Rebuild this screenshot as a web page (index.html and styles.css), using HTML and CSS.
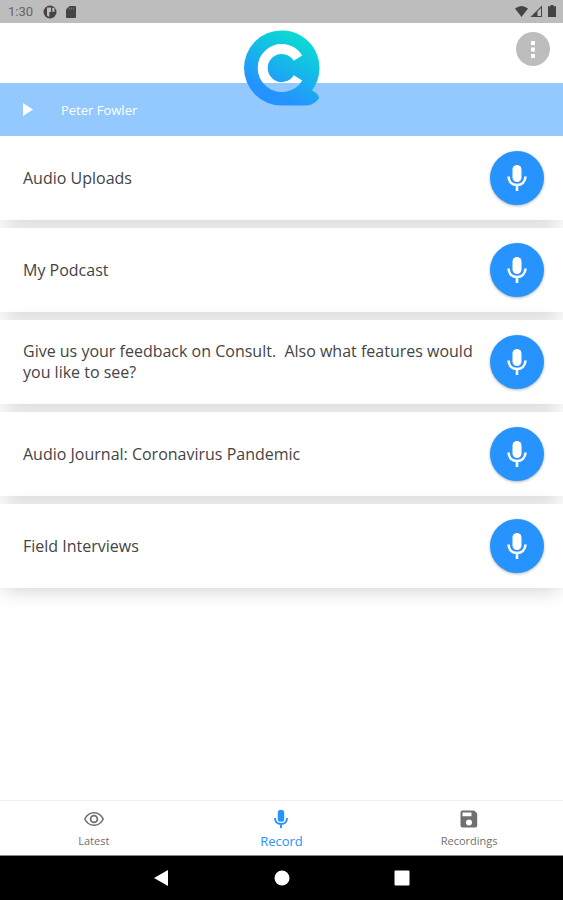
FILE: index.html
```html
<!DOCTYPE html>
<html lang="en">
<head>
<meta charset="utf-8">
<meta name="viewport" content="width=device-width, initial-scale=1">
<title>Consult</title>
<link rel="stylesheet" href="styles.css">
</head>
<body>
<svg class="defs" aria-hidden="true">
  <symbol id="mic" viewBox="0 0 20 26">
    <rect x="5.5" y="0" width="9" height="17" rx="4.5" fill="currentColor"/>
    <path d="M1.500 11.500C1.800 16.800 5.200 20 10 20S18.200 16.800 18.500 11.500M10 20v6" fill="none" stroke="currentColor" stroke-width="2.600"/>
  </symbol>
</svg>

<div class="status">
  <span class="clock">1:30</span>
  <svg class="status-app" viewBox="0 0 14 14"><circle cx="7" cy="7" r="6.500" fill="#444"/><path d="M4 2.500h4v4.500H6.300v5L4 10.500z" fill="#bdbdbd"/><path d="M9.300 2.800h2.200v4H9.300z" fill="#bdbdbd"/></svg>
  <svg class="status-card" viewBox="0 0 10 12"><path d="M3.500 0H9a1 1 0 0 1 1 1v10a1 1 0 0 1-1 1H1a1 1 0 0 1-1-1V3.500z" fill="#444"/><path d="M3.500 1.500v2M5.500 1.500v2M7.500 1.500v2" stroke="#777"/></svg>
  <svg class="status-right" viewBox="0 0 41 13"><path d="M0 3.500Q6.500-1.500 13 3.500L6.500 12z" fill="#444"/><path d="M15.500 12L27 .5V12z" fill="#444"/><path d="M22.500 6.500L26 3v8h-3.500z" fill="#bdbdbd"/><path d="M35.500 0h3v1.200H41V12h-8V1.200h2.500z" fill="#444"/></svg>
</div>

<header class="header">
  <svg class="logo" viewBox="0 0 76 76" role="img" aria-label="Consult">
    <defs>
      <linearGradient id="brand" x1=".76" y1=".12" x2=".4" y2=".84"><stop offset="0" stop-color="#0cd8d4"/><stop offset=".5" stop-color="#16b6ea"/><stop offset="1" stop-color="#2493ff"/></linearGradient>
      <mask id="cut"><rect width="76" height="76" fill="#fff"/><path d="M54 28.200A19 19 0 1 0 54 47.800" fill="none" stroke="#000" stroke-width="10"/></mask>
    </defs>
    <path d="M37.500 .5A37.500 37.500 0 0 1 68 60.500Q75 64 75 68Q74 71 68 74.200Q65 75.500 60 75.500H37.500A37.500 37.500 0 0 1 37.500 .5z" fill="url(#brand)" mask="url(#cut)"/>
  </svg>
  <button class="menu" type="button" aria-label="Menu"><svg viewBox="0 0 4 17"><path d="M0 0h4v4H0zM0 6.500h4v4H0zM0 13h4v4H0z" fill="#fff"/></svg></button>
</header>

<div class="player">
  <button class="play" type="button" aria-label="Play"><svg viewBox="0 0 10 13"><path d="M0 0l10 6.500L0 13z" fill="#fff"/></svg></button>
  <span>Peter Fowler</span>
</div>

<main class="list">
  <section class="row"><p>Audio Uploads</p><button class="rec" type="button" aria-label="Record Audio Uploads"><svg><use href="#mic"/></svg></button></section>
  <section class="row"><p>My Podcast</p><button class="rec" type="button" aria-label="Record My Podcast"><svg><use href="#mic"/></svg></button></section>
  <section class="row"><p>Give us your feedback on Consult.&nbsp; Also what features would you like to see?</p><button class="rec" type="button" aria-label="Record feedback"><svg><use href="#mic"/></svg></button></section>
  <section class="row"><p>Audio Journal: Coronavirus Pandemic</p><button class="rec" type="button" aria-label="Record Audio Journal"><svg><use href="#mic"/></svg></button></section>
  <section class="row"><p>Field Interviews</p><button class="rec" type="button" aria-label="Record Field Interviews"><svg><use href="#mic"/></svg></button></section>
</main>

<nav class="tabs">
  <a href="#latest"><svg viewBox="0 0 20 20"><path d="M.8 10C3 5.500 6.200 3.700 10 3.700S17 5.500 19.200 10C17 14.500 13.800 16.300 10 16.300S3 14.500.8 10z" fill="none" stroke="currentColor" stroke-width="1.600"/><circle cx="10" cy="10" r="3.400" fill="none" stroke="currentColor" stroke-width="1.800"/></svg>Latest</a>
  <a class="active" href="#record" aria-current="page"><svg viewBox="-4 -1 28 28"><use href="#mic" width="20" height="26"/></svg>Record</a>
  <a href="#recordings"><svg viewBox="0 0 20 20"><path d="M3.500 1.500h11.700l3 3v12a2 2 0 0 1-2 2H3.500a2 2 0 0 1-2-2v-13a2 2 0 0 1 2-2zM3.500 3.500v3.700h9V3.500zM10 10.500a3 3 0 1 0 0 6a3 3 0 1 0 0-6z" fill="currentColor" fill-rule="evenodd"/></svg>Recordings</a>
</nav>

<div class="system">
  <button type="button" aria-label="Back"><svg viewBox="0 0 16 16"><path d="M14 0v16L0 8z" fill="#fff"/></svg></button>
  <button type="button" aria-label="Home"><svg viewBox="0 0 16 16"><circle cx="8" cy="8" r="7.500" fill="#fff"/></svg></button>
  <button type="button" aria-label="Overview"><svg viewBox="0 0 16 16"><rect x=".5" y=".5" width="15" height="15" rx="1" fill="#fff"/></svg></button>
</div>
</body>
</html>
```
FILE: styles.css
```css
* {
  box-sizing: border-box;
}

body {
  margin: 0;
  min-height: 100vh;
  display: flex;
  flex-direction: column;
  background: #fff;
  color: #444;
  font-family: "Open Sans", "Noto Sans", sans-serif;
  font-size: 16px;
}

svg {
  display: block;
}

.defs {
  position: absolute;
  width: 0;
  height: 0;
}

button {
  display: flex;
  align-items: center;
  justify-content: center;
  padding: 0;
  border: 0;
  background: none;
  cursor: pointer;
}

.status {
  display: flex;
  align-items: center;
  height: 23px;
  padding: 0 7px 0 8px;
  background: #bdbdbd;
}

.clock {
  margin-right: 10px;
  color: #666;
  font: 13px/23px Roboto, sans-serif;
}

.status-app {
  width: 14px;
  height: 14px;
  margin-right: 9px;
}

.status-card {
  width: 10px;
  height: 12px;
}

.status-right {
  width: 41px;
  height: 13px;
  margin-left: auto;
}

.header {
  position: relative;
  z-index: 2;
  display: flex;
  justify-content: flex-end;
  height: 60px;
  padding: 9px 13px;
}

.logo {
  position: absolute;
  top: 7px;
  left: calc(50% - 38px);
  width: 76px;
  height: 76px;
}

.menu {
  width: 34px;
  height: 34px;
  border-radius: 50%;
  background: #bdbdbd;
}

.menu svg {
  width: 4px;
  height: 17px;
}

.player {
  position: relative;
  z-index: 1;
  display: flex;
  align-items: center;
  gap: 28px;
  height: 53px;
  padding-left: 23px;
  background: #93c9ff;
  color: #fff;
  font-size: 13px;
}

.play svg {
  width: 10px;
  height: 13px;
}

.list {
  display: flex;
  flex: 1;
  flex-direction: column;
  gap: 8px;
}

.row {
  display: flex;
  align-items: center;
  justify-content: space-between;
  gap: 16px;
  min-height: 84px;
  padding: 10px 19px 10px 23px;
  background: #fff;
  box-shadow: 0 4px 20px -4px rgba(0, 0, 0, .22);
}

.row p {
  margin: 0;
  line-height: 21px;
}

.rec {
  flex: none;
  width: 54px;
  height: 54px;
  border-radius: 50%;
  background: #2693ff;
  color: #fff;
  box-shadow: 0 1px 3px rgba(0, 0, 0, .3);
}

.rec svg {
  width: 20px;
  height: 26px;
}

.tabs {
  display: grid;
  grid-template-columns: repeat(3, 1fr);
  height: 56px;
  border-top: 1px solid #f0f0f0;
  border-bottom: 1px solid #888;
}

.tabs a {
  display: flex;
  flex-direction: column;
  align-items: center;
  gap: 4px;
  padding-top: 8px;
  color: #707070;
  font-size: 11px;
  line-height: 16px;
  text-decoration: none;
}

.tabs svg {
  width: 20px;
  height: 20px;
}

.tabs .active {
  color: #2693ff;
  font-size: 13px;
}

.system {
  display: flex;
  align-items: center;
  justify-content: center;
  gap: 104px;
  height: 44px;
  background: #000;
}

.system svg {
  width: 16px;
  height: 16px;
}
```
